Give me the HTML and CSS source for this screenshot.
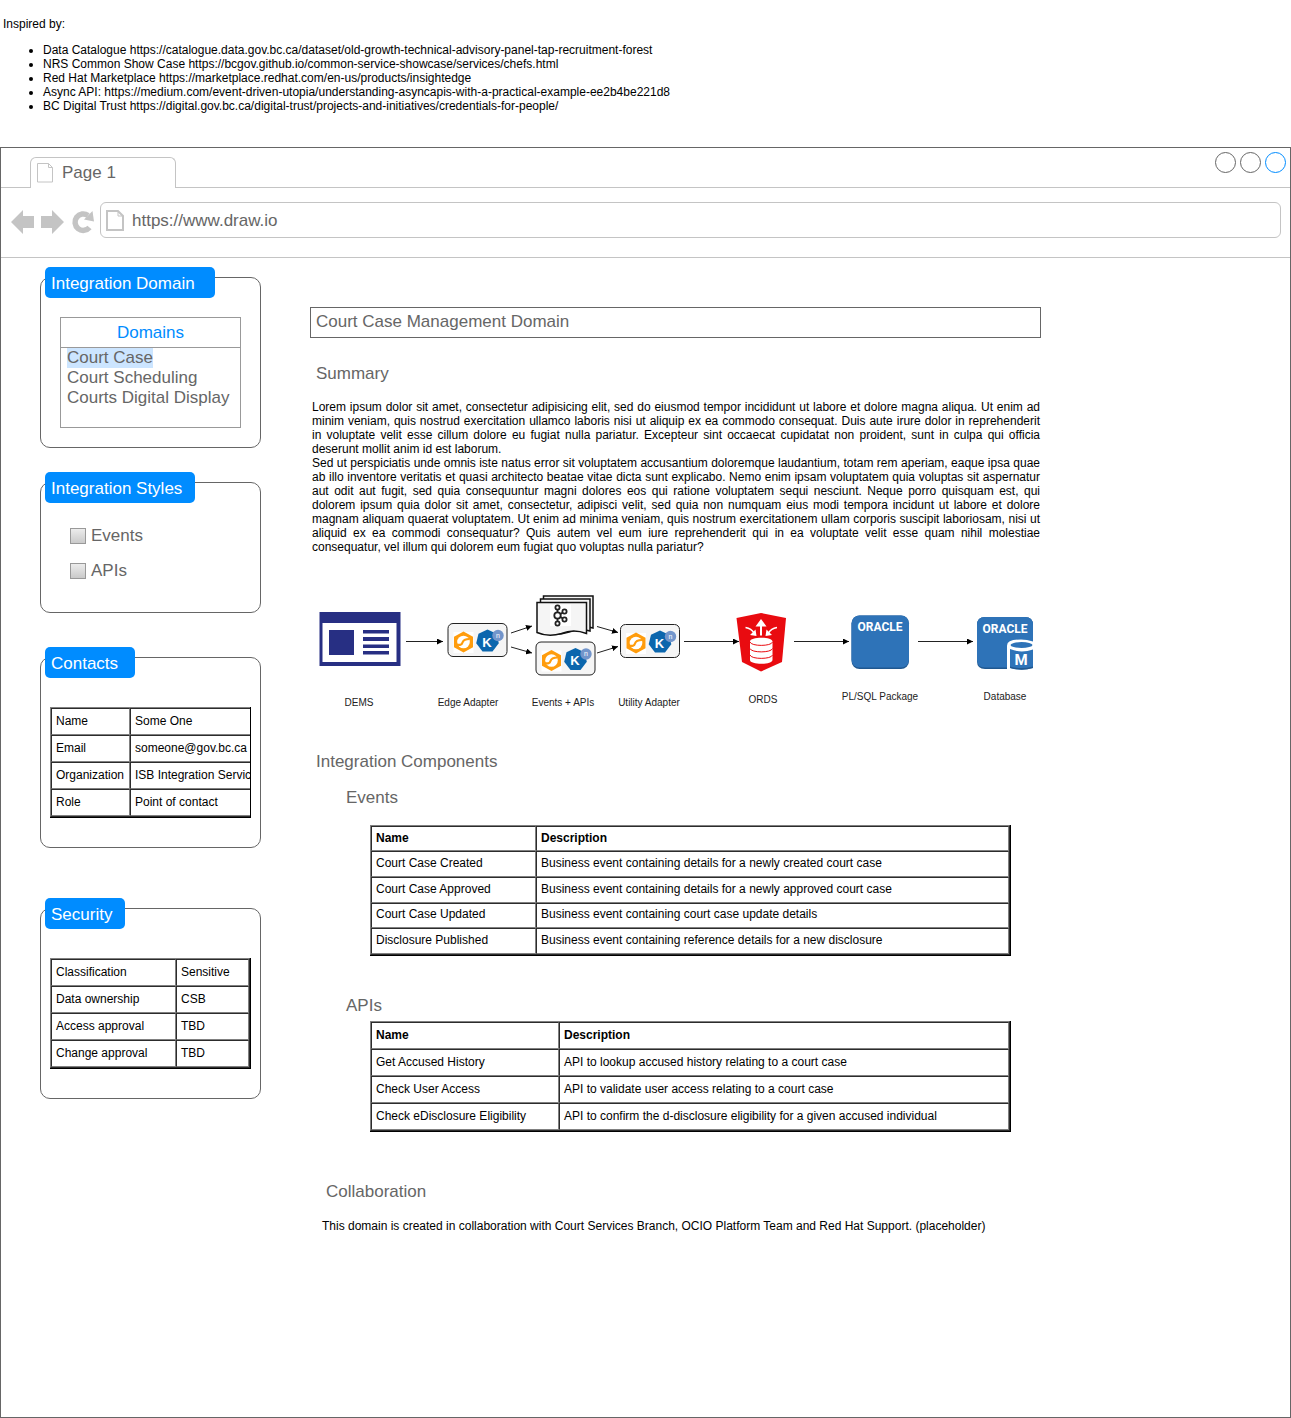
FILE: index.html
```html
<!DOCTYPE html>
<html lang="en">
<head>
<meta charset="utf-8">
<meta name="viewport" content="width=device-width, initial-scale=1">
<title>Court Case Management Domain</title>
<link rel="stylesheet" href="styles.css">
</head>
<body>
<header class="notes">
  <p>Inspired by:</p>
  <ul>
    <li>Data Catalogue https://catalogue.data.gov.bc.ca/dataset/old-growth-technical-advisory-panel-tap-recruitment-forest</li>
    <li>NRS Common Show Case https://bcgov.github.io/common-service-showcase/services/chefs.html</li>
    <li>Red Hat Marketplace https://marketplace.redhat.com/en-us/products/insightedge</li>
    <li>Async API: https://medium.com/event-driven-utopia/understanding-asyncapis-with-a-practical-example-ee2b4be221d8</li>
    <li>BC Digital Trust https://digital.gov.bc.ca/digital-trust/projects-and-initiatives/credentials-for-people/</li>
  </ul>
</header>

<div class="window">
  <div class="tabstrip">
    <div class="tab">
      <svg width="16" height="20" viewBox="0 0 16 20" fill="none" stroke="#c4c4c4"><path d="M.5.5h11l4 4v14.500h-15zM11.500.5v4h4"/></svg>
      <span>Page 1</span>
    </div>
    <div class="controls">
      <button type="button" aria-label="Minimize"></button>
      <button type="button" aria-label="Maximize"></button>
      <button type="button" class="active" aria-label="Close"></button>
    </div>
  </div>
  <div class="toolbar">
    <button type="button" aria-label="Back"><svg width="23" height="24" viewBox="0 0 23 24" fill="#c4c4c4"><path d="M0 12 12 0v6h11v12H12v6z"/></svg></button>
    <button type="button" aria-label="Forward"><svg width="23" height="24" viewBox="0 0 23 24" fill="#c4c4c4"><path d="M23 12 11 0v6H0v12h11v6z"/></svg></button>
    <button type="button" aria-label="Reload"><svg width="23" height="24" viewBox="0 0 23 24"><path d="M18.500 17.500A8.200 8.200 0 1 1 17 5.500" fill="none" stroke="#c4c4c4" stroke-width="5.500"/><path d="M21.500 1 23 11.500 13 9.500z" fill="#c4c4c4"/></svg></button>
    <label class="address">
      <svg width="18" height="21" viewBox="0 0 18 21" fill="none" stroke="#c4c4c4" stroke-width="2"><path d="M1 1h11l5 5v14H1z"/><path d="M12 1v5h5" stroke-width="1"/></svg>
      <input type="text" value="https://www.draw.io" aria-label="Address">
    </label>
  </div>

  <div class="page">
    <aside class="sidebar">
      <section class="panel domain">
        <h2>Integration Domain</h2>
        <div class="listbox">
          <h3>Domains</h3>
          <ul>
            <li><span class="selected">Court Case</span></li>
            <li>Court Scheduling</li>
            <li>Courts Digital Display</li>
          </ul>
        </div>
      </section>
      <section class="panel styles">
        <h2>Integration Styles</h2>
        <div class="checks">
          <label><input type="checkbox">Events</label>
          <label><input type="checkbox">APIs</label>
        </div>
      </section>
      <section class="panel contacts">
        <h2>Contacts</h2>
        <div class="grid">
          <table>
            <tr><td>Name</td><td>Some One</td></tr>
            <tr><td>Email</td><td>someone@gov.bc.ca</td></tr>
            <tr><td>Organization</td><td>ISB Integration Services</td></tr>
            <tr><td>Role</td><td>Point of contact</td></tr>
          </table>
        </div>
      </section>
      <section class="panel security">
        <h2>Security</h2>
        <div class="grid">
          <table>
            <tr><td>Classification</td><td>Sensitive</td></tr>
            <tr><td>Data ownership</td><td>CSB</td></tr>
            <tr><td>Access approval</td><td>TBD</td></tr>
            <tr><td>Change approval</td><td>TBD</td></tr>
          </table>
        </div>
      </section>
    </aside>

    <main class="content">
      <h1>Court Case Management Domain</h1>
      <h2>Summary</h2>
      <div class="summary">
        <p>Lorem ipsum dolor sit amet, consectetur adipisicing elit, sed do eiusmod tempor incididunt ut labore et dolore magna aliqua. Ut enim ad minim veniam, quis nostrud exercitation ullamco laboris nisi ut aliquip ex ea commodo consequat. Duis aute irure dolor in reprehenderit in voluptate velit esse cillum dolore eu fugiat nulla pariatur. Excepteur sint occaecat cupidatat non proident, sunt in culpa qui officia deserunt mollit anim id est laborum.</p>
        <p>Sed ut perspiciatis unde omnis iste natus error sit voluptatem accusantium doloremque laudantium, totam rem aperiam, eaque ipsa quae ab illo inventore veritatis et quasi architecto beatae vitae dicta sunt explicabo. Nemo enim ipsam voluptatem quia voluptas sit aspernatur aut odit aut fugit, sed quia consequuntur magni dolores eos qui ratione voluptatem sequi nesciunt. Neque porro quisquam est, qui dolorem ipsum quia dolor sit amet, consectetur, adipisci velit, sed quia non numquam eius modi tempora incidunt ut labore et dolore magnam aliquam quaerat voluptatem. Ut enim ad minima veniam, quis nostrum exercitationem ullam corporis suscipit laboriosam, nisi ut aliquid ex ea commodi consequatur? Quis autem vel eum iure reprehenderit qui in ea voluptate velit esse quam nihil molestiae consequatur, vel illum qui dolorem eum fugiat quo voluptas nulla pariatur?</p>
      </div>

      <svg class="diagram" viewBox="310 590 731 124" role="img" aria-label="Integration flow from DEMS to Database">
        <defs>
          <marker id="arrow" viewBox="0 0 6 6" refX="6" refY="3" markerWidth="6" markerHeight="6" orient="auto"><path d="M0 0 6 3 0 6z"/></marker>
          <g id="adapter">
            <rect x=".5" y=".5" width="59" height="33" rx="5" fill="#f5f5f5" stroke="#222"/>
            <path d="M6 9h20v21H6z" fill="#fff"/>
            <path d="M16 8.500l9.500 5.300v10.500L16 29.600l-9.500-5.300V13.800z" fill="#ff9c0c"/>
            <circle cx="16" cy="19" r="6.300" fill="#fff"/>
            <path d="M9 21.500q5 1.500 6-2t7-3.500" fill="none" stroke="#ff9c0c" stroke-width="2.200"/>
            <path d="M40 6.500l9 4.200 2.300 9.600-6.300 8.200H35l-6.300-8.200 2.300-9.600z" fill="#0b66ad"/>
            <text class="knative" x="39.500" y="23.500">K</text>
            <circle cx="50.500" cy="12.500" r="5.700" fill="#7295cb"/>
            <text class="tiny" x="50.500" y="14.500">n</text>
          </g>
        </defs>

        <path d="M319.500 612h81v54h-81z" fill="#272f83"/>
        <path d="M322.500 623h74v39h-74z" fill="#fff"/>
        <path d="M329 630h25v25h-25zM363 630h26v3.500h-26zM363 637h26v4h-26zM363 644.500h26v3.500h-26zM363 651h26v3.500h-26z" fill="#272f83"/>

        <use href="#adapter" x="447.500" y="623"/>
        <use href="#adapter" x="535.500" y="641.500"/>
        <use href="#adapter" x="620" y="624"/>

        <g fill="#f5f5f5" stroke="#111" stroke-width="1.500">
          <path d="M543.500 596h49.500v32q-10-3-21 1-12 4-28.500 1z"/>
          <path d="M540.500 599h49.500v32q-10-3-21 1-12 4-28.500 1z"/>
          <path d="M537 602.500h49.500v31q-13-5-25 0-13 4-24.500-1z"/>
        </g>
        <path d="M550 604.500h21v21.500h-21z" fill="#fff"/>
        <g fill="none" stroke="#222" stroke-width="1.800">
          <circle cx="557.500" cy="615.500" r="3.200"/><circle cx="557.500" cy="607.500" r="2.100"/><circle cx="557.500" cy="623.500" r="2.100"/>
          <circle cx="564.500" cy="611.500" r="2.100"/><circle cx="564.500" cy="619.500" r="2.100"/>
          <path d="M557.500 609.500v3M557.500 618.500v3M560.500 614l2-1.300M560.500 617l2 1.300"/>
        </g>

        <g class="arrows">
          <path d="M406 641.500h37"/><path d="M511 633l21-7"/><path d="M511 647l21 6"/>
          <path d="M597 626.500l21 6"/><path d="M597 653l21-6.500"/>
          <path d="M684 641.500h55"/><path d="M794 641.500h55"/><path d="M918 641.500h55"/>
        </g>

        <path d="M736.500 618l24.500-5 25 5-4 44-21 9.500-19-9.500z" fill="#e90b10"/>
        <g fill="#fff">
          <path d="M761 619l5.500 7.500h-4.500v9h-2v-9h-4.500z"/>
          <path d="M756.500 636l-6.500-1 5.500-5.500zM765.500 636l6.500-1-5.500-5.500z"/>
          <path d="M750 641.500c0-5 22.500-5 22.500 0V660c0 5-22.500 5-22.500 0z"/>
        </g>
        <path d="M745.500 627.500q6 1 8.500 5.500M777 627.500q-6 1-8.500 5.500" fill="none" stroke="#fff" stroke-width="1.500"/>
        <path d="M750 642c1 4.500 21.500 4.500 22.500 0M750 648.500c1 4.500 21.500 4.500 22.500 0M750 655c1 4.500 21.500 4.500 22.500 0" fill="none" stroke="#e90b10"/>

        <rect x="851.500" y="615.500" width="57.500" height="53.500" rx="8" fill="#205890"/>
        <rect x="851.500" y="615.500" width="57.500" height="52" rx="8" fill="#2e73b8"/>
        <text class="oracle" x="880" y="631">ORACLE</text>

        <path d="M985 617h40q8 0 8 8v44h-48q-8 0-8-8v-36q0-8 8-8z" fill="#205890"/>
        <path d="M985 617h40q8 0 8 8v42.500h-48q-8 0-8-8V625q0-8 8-8z" fill="#2e73b8"/>
        <text class="oracle" x="1005" y="633">ORACLE</text>
        <path d="M1033 641.500q-6-2-12-2-14 0-14 6V670h26z" fill="#fff"/>
        <path d="M1010 649q11 4.500 23 .5v18.500q-11 3.500-23 0z" fill="#2e73b8"/>
        <path d="M1010 666.500q11 3 23 0v1.500q-11 3.500-23 0z" fill="#205890"/>
        <ellipse cx="1021.500" cy="645" rx="11" ry="3" fill="#2e73b8"/>
        <text class="cylinder" x="1021" y="665">M</text>

        <g class="labels">
          <text x="359" y="706">DEMS</text>
          <text x="468" y="706">Edge Adapter</text>
          <text x="563" y="706">Events + APIs</text>
          <text x="649" y="706">Utility Adapter</text>
          <text x="763" y="703">ORDS</text>
          <text x="880" y="700">PL/SQL Package</text>
          <text x="1005" y="700">Database</text>
        </g>
      </svg>

      <h2>Integration Components</h2>
      <section class="component events">
        <h3>Events</h3>
        <div class="grid">
          <table>
            <thead><tr><th>Name</th><th>Description</th></tr></thead>
            <tbody>
              <tr><td>Court Case Created</td><td>Business event containing details for a newly created court case</td></tr>
              <tr><td>Court Case Approved</td><td>Business event containing details for a newly approved court case</td></tr>
              <tr><td>Court Case Updated</td><td>Business event containing court case update details</td></tr>
              <tr><td>Disclosure Published</td><td>Business event containing reference details for a new disclosure</td></tr>
            </tbody>
          </table>
        </div>
      </section>
      <section class="component apis">
        <h3>APIs</h3>
        <div class="grid">
          <table>
            <thead><tr><th>Name</th><th>Description</th></tr></thead>
            <tbody>
              <tr><td>Get Accused History</td><td>API to lookup accused history relating to a court case</td></tr>
              <tr><td>Check User Access</td><td>API to validate user access relating to a court case</td></tr>
              <tr><td>Check eDisclosure Eligibility</td><td>API to confirm the d-disclosure eligibility for a given accused individual</td></tr>
            </tbody>
          </table>
        </div>
      </section>
      <section class="collaboration">
        <h2>Collaboration</h2>
        <p>This domain is created in collaboration with Court Services Branch, OCIO Platform Team and Red Hat Support. (placeholder)</p>
      </section>
    </main>
  </div>
</div>
</body>
</html>
```
FILE: styles.css
```css
* { box-sizing: border-box; }

body {
  margin: 0;
  min-height: 100vh;
  display: flex;
  flex-direction: column;
  background: #fff;
  color: #000;
  font: 12px/14px "Liberation Sans", Arial, sans-serif;
}

h1, h2, h3, p, ul { margin: 0; padding: 0; font-weight: normal; }
h1, h2, h3 { font-size: 17px; line-height: 20px; color: #666; }
button { padding: 0; border: 0; background: none; }
svg { display: block; flex: none; }

.notes { padding: 17px 3px 34px; }
.notes ul { margin-top: 12px; padding-left: 40px; }

/* Browser window */
.window { flex: 1; border: 1px solid #666; }

.tabstrip {
  display: flex;
  height: 40px;
  padding: 0 4px 0 29px;
  border-bottom: 1px solid #c4c4c4;
  color: #666;
  font-size: 17px;
}
.tab {
  display: flex;
  align-items: center;
  gap: 9px;
  width: 146px;
  margin: 9px 0 -1px;
  padding-left: 6px;
  border: 1px solid #c4c4c4;
  border-bottom: 0;
  border-radius: 6px 6px 0 0;
  background: #fff;
}
.controls { display: flex; gap: 4px; margin: 4px 0 0 auto; }
.controls button { width: 21px; height: 21px; border: 1px solid #666; border-radius: 50%; }
.controls .active { border-color: #008cff; }

.toolbar {
  display: flex;
  align-items: center;
  gap: 7px;
  height: 70px;
  padding: 0 9px 5px 10px;
  border-bottom: 1px solid #c4c4c4;
}
.toolbar button { padding-top: 3px; }
.address {
  flex: 1;
  display: flex;
  align-items: center;
  gap: 8px;
  height: 36px;
  margin-left: -1px;
  padding: 1px 0 0 5px;
  border: 1px solid #c4c4c4;
  border-radius: 6px;
}
.address input {
  flex: 1;
  min-width: 0;
  padding: 0;
  border: 0;
  outline: 0;
  background: none;
  color: #666;
  font: 17px/20px "Liberation Sans", Arial, sans-serif;
}

.page { display: flex; gap: 49px; padding: 19px 20px 19px 39px; }

/* Sidebar panels */
.sidebar { flex: none; width: 221px; }
.panel { padding: 0 9px 29px; border: 1px solid #666; border-radius: 10px; }
.panel h2 {
  width: 170px;
  margin: -11px 0 0 -5px;
  padding: 7px 6px 4px;
  border-radius: 5px;
  background: #008cff;
  color: #fff;
}
.styles { margin-top: 34px; }
.contacts { margin-top: 44px; }
.security { margin-top: 60px; }
.styles h2 { width: 150px; }
.contacts h2 { width: 90px; }
.security h2 { width: 80px; }

.domain { padding-bottom: 19px; }
.listbox { min-height: 111px; margin: 19px 10px 0; border: 1px solid #999; }
.listbox h3 { padding: 5px 5px 4px; border-bottom: 1px solid #999; color: #008cff; text-align: center; }
.listbox ul { padding-left: 6px; list-style: none; color: #666; font-size: 17px; line-height: 20px; }
.selected { display: inline-block; background: #cce5ff; }

.checks {
  display: flex;
  flex-direction: column;
  gap: 15px;
  padding: 23px 20px 2px;
  color: #666;
  font-size: 17px;
  line-height: 20px;
}
.checks label { display: flex; align-items: center; gap: 5px; }
.checks input {
  appearance: none;
  width: 16px;
  height: 16px;
  margin: 0;
  border: 1px solid #999;
  background: linear-gradient(#ececec, #cacaca);
}

/* Bevelled data tables */
.grid { overflow: hidden; border: solid #000; border-width: 0 1px 1px 0; }
.grid table {
  width: 100%;
  border: 1px solid;
  border-color: #808080 #2c2c2c #2c2c2c #808080;
  border-spacing: 0;
}
.grid th, .grid td {
  height: 27px;
  padding: 0 4px 2px;
  border: 1px solid;
  border-color: #2c2c2c #808080 #808080 #2c2c2c;
  text-align: left;
  white-space: nowrap;
}
.panel .grid { margin-top: 29px; }
.contacts td:first-child { width: 80px; min-width: 79px; }
.security td:first-child { width: 125px; }

/* Main column */
.content { flex: 0 1 731px; min-width: 0; padding-top: 30px; }
.content h1 { padding: 4px 5px 5px; border: 1px solid #666; }
.content h2 { padding-left: 6px; }
.content h1 + h2 { margin-top: 26px; }
.summary { margin-top: 16px; padding: 0 1px 0 2px; text-align: justify; }
.diagram { width: 100%; margin: 36px 0 38px; }
.component { padding: 0 30px 0 36px; }
.component .grid { margin-left: 24px; }
.events { margin-top: 16px; }
.events .grid { margin-top: 17px; }
.events .grid table { height: 130px; }
.events th, .events td { height: 25px; }
.events th:first-child { width: 165px; }
.apis { margin-top: 40px; }
.apis .grid { margin-top: 5px; }
.apis th:first-child { width: 188px; }
.collaboration { margin-top: 50px; padding-left: 10px; }
.collaboration p { margin-top: 17px; padding-left: 2px; }

/* Flow diagram */
.diagram text { text-anchor: middle; }
.labels { font-size: 10px; fill: #222; }
.arrows path { fill: none; stroke: #222; marker-end: url(#arrow); }
.knative { font-size: 13px; font-weight: bold; fill: #fff; }
.tiny { font-size: 7px; fill: #fff; }
.oracle { font: bold 12px Roboto, sans-serif; fill: #fff; }
.cylinder { font: bold 15px Roboto, sans-serif; fill: #fff; }
```
